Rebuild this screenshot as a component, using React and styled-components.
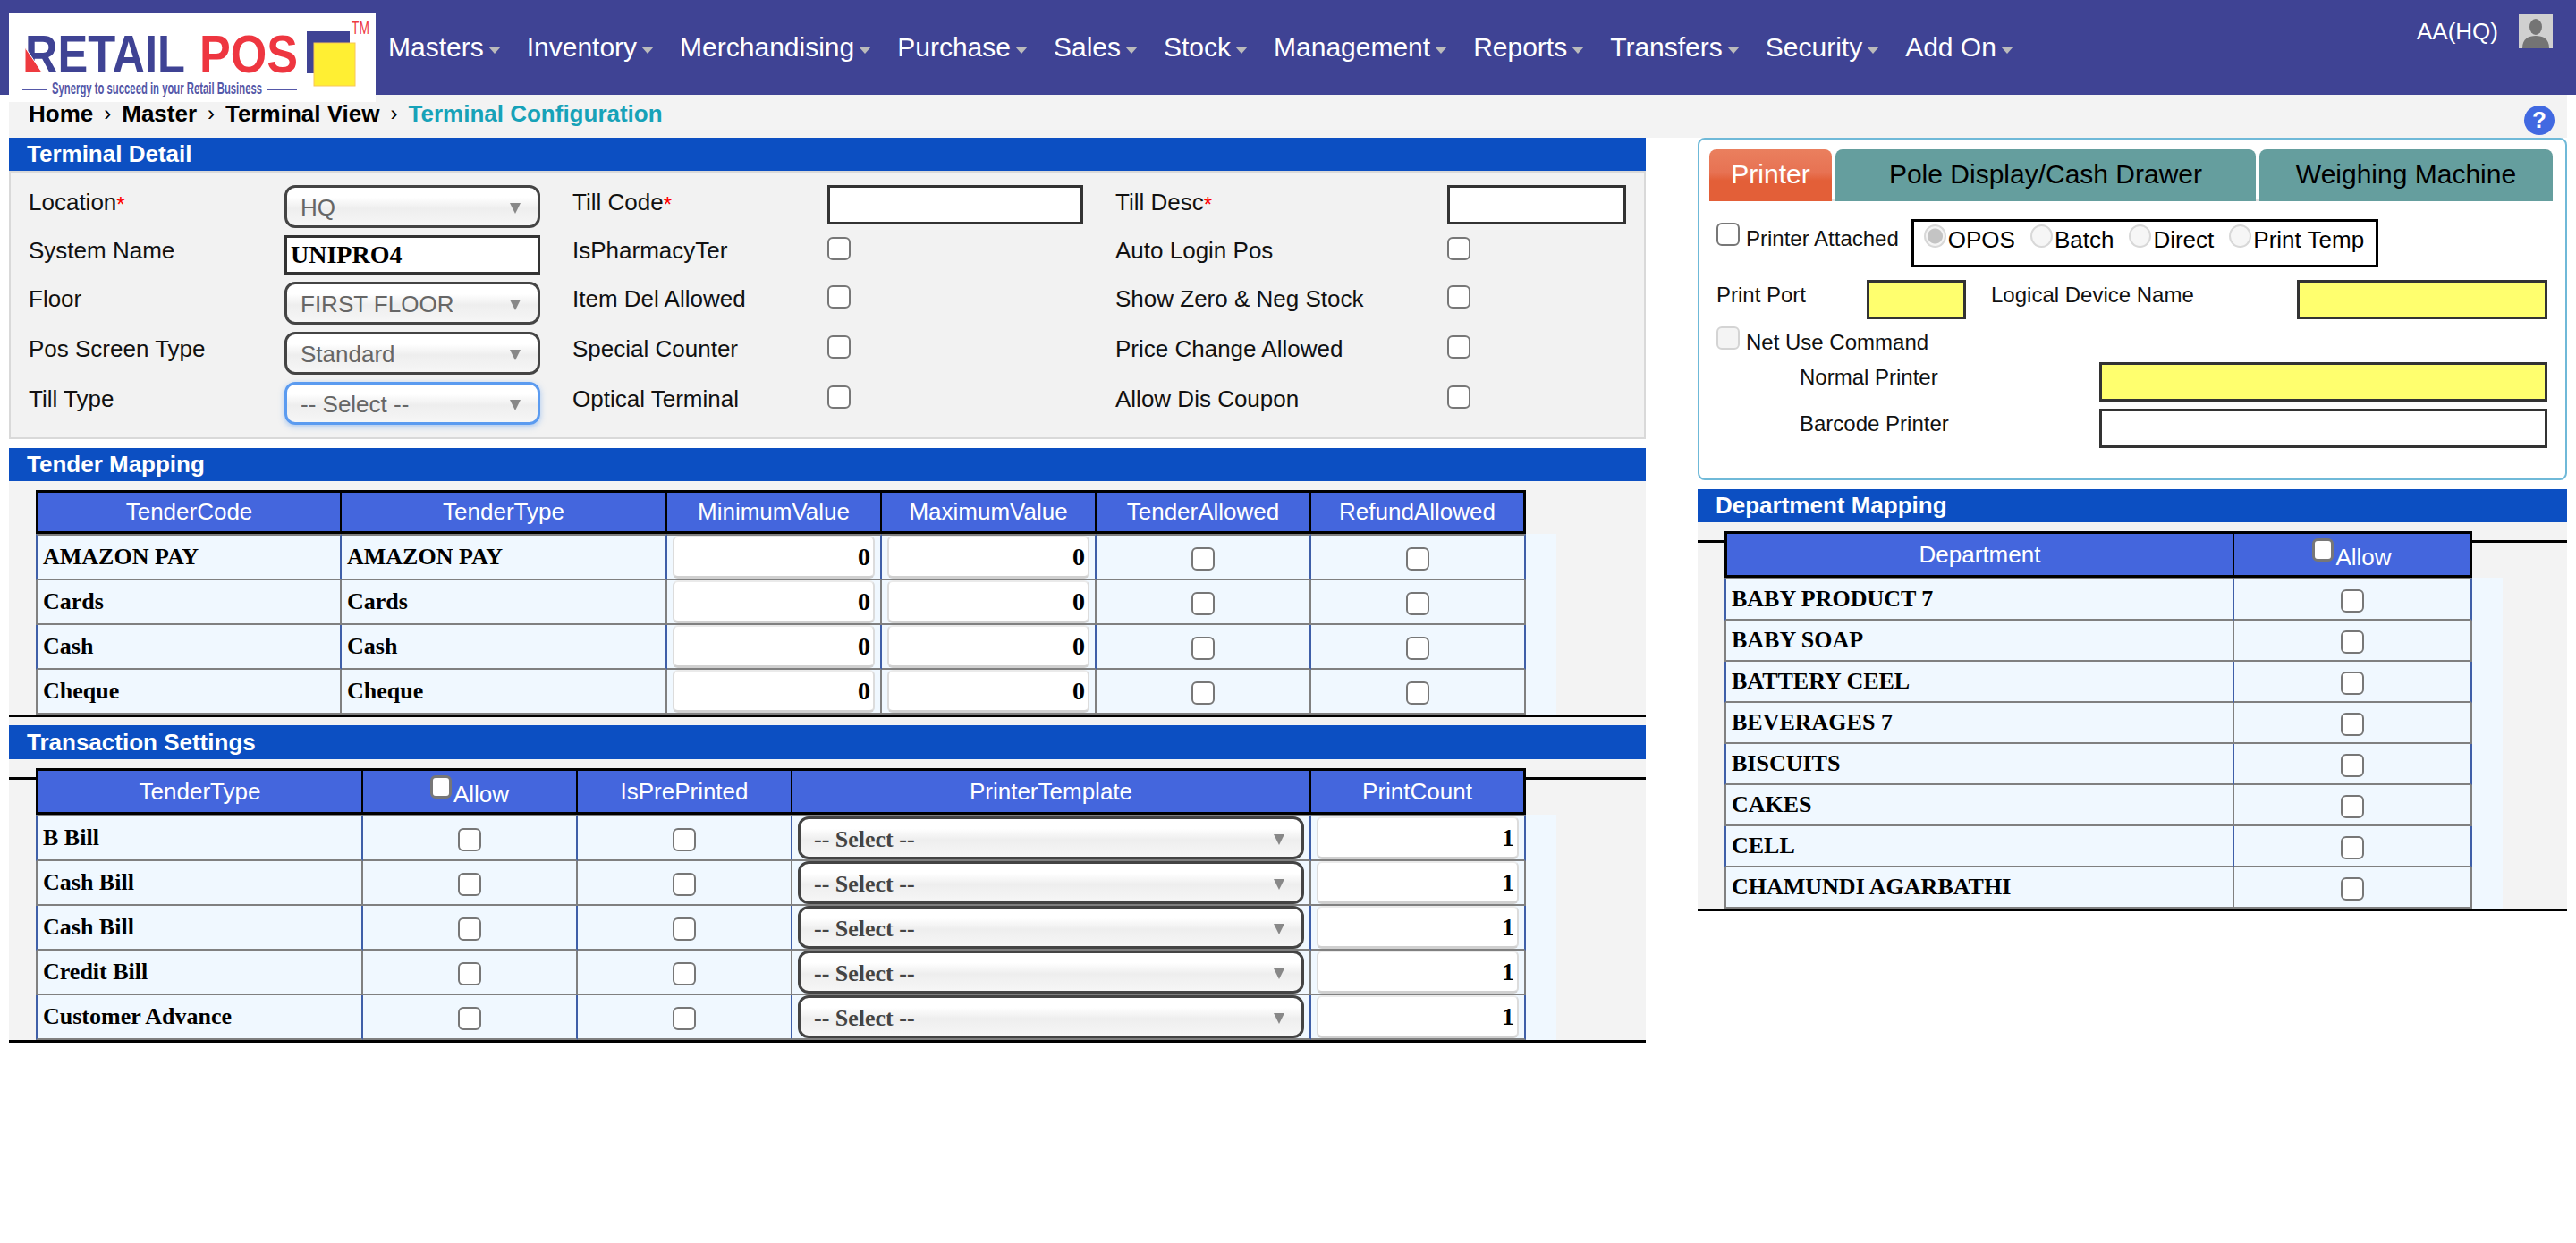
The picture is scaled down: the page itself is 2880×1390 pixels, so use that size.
import React from 'react'
import styled, { createGlobalStyle } from 'styled-components'

const GlobalStyle = createGlobalStyle`
  html, body {
    margin: 0;
    padding: 0;
    background: #fff;
    color: #111;
    font-family: "Liberation Sans", Arial, sans-serif;
  }

  * {
    box-sizing: border-box;
  }
`

const TopBar = styled.header`
  display: flex;
  align-items: flex-start;
  height: 106px;
  background: #3f4394;
`

const LogoBox = styled.div`
  position: relative;
  z-index: 1;
  flex: none;
  width: 410px;
  height: 100px;
  margin: 14px 0 0 10px;
  background: #fff;

  svg {
    display: block;
    overflow: visible;
  }
`

const Nav = styled.nav`
  display: flex;
  align-self: center;
  gap: 29px;
  margin-left: 14px;
`

const NavItem = styled.a`
  display: flex;
  align-items: center;
  gap: 5px;
  color: #fff;
  font-size: 30px;
  line-height: 36px;

  &::after {
    content: '';
    margin-top: 6px;
    border-style: solid;
    border-width: 8px 7px 0;
    border-color: #bbb transparent transparent;
  }
`

const UserBox = styled.div`
  display: flex;
  align-items: center;
  gap: 23px;
  margin: 16px 26px 0 auto;
  color: #fff;
  font-size: 26px;
`

const Crumbs = styled.div`
  display: flex;
  align-items: center;
  height: 48px;
  margin: 0 10px;
  padding: 0 14px 6px 22px;
  background: #f3f3f3;
  font-size: 26px;
  font-weight: bold;
  color: #000;
`

const CrumbSep = styled.span`
  margin: 0 12px;
  font-weight: normal;
  font-size: 24px;
`

const CrumbNow = styled.span`
  color: #17a2b8;
`

const HelpDot = styled.span`
  display: flex;
  align-items: center;
  justify-content: center;
  width: 34px;
  height: 33px;
  margin: 15px 0 0 auto;
  border-radius: 50%;
  background: #4169e1;
  color: #fff;
  font-size: 26px;
`

const Columns = styled.main`
  display: flex;
  gap: 58px;
  padding: 0 10px;
`

const LeftCol = styled.div`
  flex: none;
  width: 1830px;
`

const RightCol = styled.div`
  flex: none;
  width: 972px;
`

const SectionHead = styled.h2`
  margin: 0;
  height: ${p => p.$h || 37}px;
  padding-left: 20px;
  background: #0c4fc2;
  color: #fff;
  font-size: 26px;
  font-weight: bold;
  line-height: ${p => p.$h || 37}px;
`

const DetailPanel = styled.div`
  display: grid;
  grid-template-columns: 286px 286px 321px 286px 407px 200px;
  grid-template-rows: 48px 44px 48px 48px 48px;
  row-gap: 8px;
  height: 300px;
  margin-bottom: 10px;
  padding: 14px 0 0 20px;
  border: 2px solid #d9d9d9;
  background: #f2f2f2;
`

const FieldLabel = styled.label`
  align-self: center;
  margin-bottom: 10px;
  font-size: 26px;
  color: #111;
`

const MidLabel = styled(FieldLabel)`
  padding-left: 36px;
`

const Req = styled.span`
  color: #f00;
  font-size: 24px;
  line-height: 0;
  vertical-align: -2px;
`

const Check = styled.input.attrs({ type: 'checkbox' })`
  appearance: none;
  display: block;
  flex: none;
  width: 26px;
  height: 26px;
  margin: 0;
  border: 2px solid ${p => (p.disabled ? '#d4d4d4' : '#777')};
  border-radius: 6px;
  background: ${p => (p.disabled ? '#f4f4f4' : '#fff')};
`

const GridCheck = styled(Check)`
  align-self: center;
  margin-bottom: 14px;
`

const TextBox = styled.input`
  display: block;
  height: 44px;
  margin: 0;
  padding: 0 4px;
  border: 3px solid #333;
  border-radius: 0;
  outline: none;
  background: ${p => (p.$yellow ? '#ffff6e' : '#fff')};
  color: #000;
  font-family: "Liberation Serif", "Times New Roman", serif;
  font-size: 28px;
  font-weight: bold;
`

const GridBox = styled(TextBox)`
  width: 100%;
`

const SelectWrap = styled.div`
  position: relative;
  height: 48px;

  &::after {
    content: '';
    position: absolute;
    top: 20px;
    right: 22px;
    border-style: solid;
    border-width: 12px 6px 0;
    border-color: #888 transparent transparent;
    pointer-events: none;
  }
`

const Select = styled.select`
  appearance: none;
  display: block;
  width: 100%;
  height: 100%;
  margin: 0;
  padding: 2px 0 0 15px;
  border: 3px solid ${p => (p.$focus ? '#5b9bf0' : '#444')};
  border-radius: 12px;
  outline: none;
  background: linear-gradient(#fff 0%, #fff 25%, #eeeeee 55%, #f6f6f6 100%);
  box-shadow: ${p => (p.$focus ? '0 2px 6px rgba(91, 155, 240, 0.5)' : 'none')};
  color: ${p => (p.$cell ? '#444' : '#666')};
  font-family: ${p => (p.$cell ? '"Liberation Serif", serif' : '"Liberation Sans", sans-serif')};
  font-size: 26px;
  font-weight: ${p => (p.$cell ? 'bold' : 'normal')};
`

const TableSection = styled.section`
  padding-top: 10px;
  border-bottom: 3px solid #000;
  background: ${p => (p.$rule === undefined
    ? '#f3f3f3'
    : `linear-gradient(#000, #000) 0 ${p.$rule}px / 100% 3px no-repeat, #f3f3f3`)};
`

const SectionGap = styled.div`
  height: 9px;
  background: #f3f3f3;
`

const TableShell = styled.div`
  width: ${p => p.$width}px;
  margin-left: 30px;
  background: linear-gradient(transparent ${p => p.$head}px, #f0f8ff ${p => p.$head}px);
`

const GridTable = styled.table`
  table-layout: fixed;
  width: ${p => p.$width}px;
  border-collapse: separate;
  border-spacing: 0;
`

const HeadCell = styled.th`
  height: ${p => p.$h}px;
  padding: 0;
  border-top: 3px solid #000;
  border-bottom: 3px solid #000;
  border-right: 2px solid #000;
  background: #4466dd;
  color: #fff;
  font-size: 26px;
  font-weight: normal;
  text-align: center;

  &:first-child {
    border-left: 3px solid #000;
  }

  &:last-child {
    border-right-width: 3px;
  }
`

const AllowHead = styled.span`
  display: inline-flex;
  align-items: flex-start;
  padding-top: 6px;
`

const HeadCheck = styled(Check)`
  width: 24px;
  margin: -6px 2px 0 0;
  border-width: 3px;
`

const BodyRow = styled.tr`
  td {
    border-right-color: ${p => (p.$odd ? '#3f5fa8' : '#808080')};
  }

  td:first-child {
    border-left-color: ${p => (p.$odd ? '#3f5fa8' : '#808080')};
  }

  &:first-child td {
    height: ${p => p.$h + 2}px;
    border-top: 2px solid #808080;
  }
`

const BodyCell = styled.td`
  height: ${p => p.$h}px;
  padding: 0;
  border-bottom: 2px solid #808080;
  border-right: 2px solid #808080;
  background: #f0f8ff;
  color: #000;
  font-family: "Liberation Serif", "Times New Roman", serif;
  font-size: 26px;
  font-weight: bold;

  &:first-child {
    border-left: 2px solid #808080;
  }
`

const NameCell = styled(BodyCell)`
  padding: 0 0 0 6px;
`

const FillCell = styled(BodyCell)`
  padding: 0 6px;
`

const CellCheck = styled(Check)`
  margin: 4px auto 0;
`

const NumberBox = styled.input`
  display: block;
  width: 100%;
  height: 48px;
  margin: 0;
  padding: 0 3px 0 0;
  border: 2px solid #dcdcdc;
  border-top-color: #eaeaea;
  border-bottom: 3px solid #d0d0d0;
  border-radius: 6px;
  outline: none;
  background: #fff;
  color: #000;
  font-family: "Liberation Serif", "Times New Roman", serif;
  font-size: 28px;
  font-weight: bold;
  text-align: right;
`

const TabCard = styled.div`
  height: 383px;
  margin-bottom: 10px;
  padding: 11px 14px 0 11px;
  border: 2px solid #6fb9d8;
  border-radius: 8px;
  background: #fff;
`

const TabRow = styled.div`
  display: flex;
  gap: 4px;
  height: 58px;
  border-bottom: 2px solid #e2e2e2;
`

const Tab = styled.div`
  display: flex;
  align-items: center;
  justify-content: center;
  flex: none;
  width: ${p => p.$w}px;
  height: 58px;
  padding-bottom: 2px;
  border-radius: 8px 8px 0 0;
  background: ${p => (p.$active ? 'linear-gradient(#ea7f5e, #e77253 45%, #e35f38 60%, #e35f38)' : '#659e9e')};
  color: ${p => (p.$active ? '#fff' : '#000')};
  font-size: 30px;
`

const FormRow = styled.div`
  display: flex;
  align-items: ${p => p.$align || 'center'};
  margin-top: ${p => p.$top}px;
  padding-left: ${p => p.$left || 8}px;
`

const FormText = styled.span`
  flex: none;
  width: ${p => (p.$w ? `${p.$w}px` : 'auto')};
  margin-bottom: ${p => p.$up || 0}px;
  margin-left: ${p => p.$ml || 0}px;
  margin-top: ${p => p.$down || 0}px;
  font-size: 24px;
  color: #111;
`

const TopCheck = styled(Check)`
  margin-top: 4px;
`

const RadioGroup = styled.div`
  display: flex;
  align-items: center;
  gap: 17px;
  width: 522px;
  height: 54px;
  margin-left: 14px;
  padding-left: 11px;
  border: 3px solid #000;
  font-size: 26px;
`

const RadioItem = styled.label`
  display: flex;
  align-items: center;
  gap: 2px;
  margin-bottom: 8px;
  color: #000;
`

const Radio = styled.input.attrs({ type: 'radio', disabled: true })`
  appearance: none;
  flex: none;
  width: 25px;
  height: 26px;
  margin: -8px 0 0;
  border: 2px solid #d8d8d8;
  border-radius: 50%;
  background: #f6f6f6;

  &:checked {
    background: radial-gradient(circle, #c4c4c4 0 8px, #f4f4f4 9px);
  }
`

const FormBox = styled(TextBox)`
  flex: none;
  width: ${p => p.$w}px;
`

const tenders = ['AMAZON PAY', 'Cards', 'Cash', 'Cheque']
const transactions = ['B Bill', 'Cash Bill', 'Cash Bill', 'Credit Bill', 'Customer Advance']
const departments = [
  'BABY PRODUCT 7', 'BABY SOAP', 'BATTERY CEEL', 'BEVERAGES 7',
  'BISCUITS', 'CAKES', 'CELL', 'CHAMUNDI AGARBATHI',
]
const menu = [
  'Masters', 'Inventory', 'Merchandising', 'Purchase', 'Sales', 'Stock',
  'Management', 'Reports', 'Transfers', 'Security', 'Add On',
]

function Logo() {
  return (
    <svg width="410" height="100" viewBox="0 0 410 100">
      <text x="18" y="67" fontFamily="Liberation Sans" fontWeight="bold" fontSize="59" fill="#3f4394" textLength="179" lengthAdjust="spacingAndGlyphs">RETAIL</text>
      <polygon points="18,39 37,67 18,67" fill="#ee3a3f" stroke="#fff" strokeWidth="1" />
      <text x="213" y="67" fontFamily="Liberation Sans" fontWeight="bold" fontSize="59" fill="#ee3640" textLength="110" lengthAdjust="spacingAndGlyphs">POS</text>
      <path d="M333 21h48v14h-40v33h-8z" fill="#3f4394" />
      <rect x="341" y="34" width="46" height="48" fill="#ffef33" stroke="#f8c65a" strokeWidth="1" />
      <text x="383" y="24" fontFamily="Liberation Sans" fontSize="21" fill="#ee3a3f" textLength="20" lengthAdjust="spacingAndGlyphs">TM</text>
      <rect x="15" y="85" width="28" height="2" fill="#5558a8" />
      <text x="48" y="91" fontFamily="Liberation Sans" fontWeight="bold" fontSize="18" fill="#5558a8" textLength="235" lengthAdjust="spacingAndGlyphs">Synergy to succeed in your Retail Business</text>
      <rect x="288" y="85" width="34" height="2" fill="#5558a8" />
    </svg>
  )
}

function Avatar() {
  return (
    <svg width="38" height="38" viewBox="0 0 38 38">
      <rect width="38" height="38" fill="#d0d0d0" />
      <ellipse cx="19" cy="14" rx="7" ry="9" fill="#747474" />
      <path d="M4 38c0-11 7-14 15-14s15 3 15 14z" fill="#747474" />
    </svg>
  )
}

function CellSelect() {
  return (
    <SelectWrap>
      <Select $cell defaultValue="x">
        <option value="x">-- Select --</option>
      </Select>
    </SelectWrap>
  )
}

function FieldSelect({ value, focus }) {
  return (
    <SelectWrap>
      <Select $focus={focus} defaultValue={value}>
        <option value={value}>{value}</option>
      </Select>
    </SelectWrap>
  )
}

function TerminalDetail() {
  return (
    <DetailPanel>
      <FieldLabel>Location<Req>*</Req></FieldLabel>
      <FieldSelect value="HQ" />
      <MidLabel>Till Code<Req>*</Req></MidLabel>
      <GridBox />
      <MidLabel>Till Desc<Req>*</Req></MidLabel>
      <GridBox />

      <FieldLabel>System Name</FieldLabel>
      <GridBox defaultValue="UNIPRO4" />
      <MidLabel>IsPharmacyTer</MidLabel>
      <GridCheck />
      <MidLabel>Auto Login Pos</MidLabel>
      <GridCheck />

      <FieldLabel>Floor</FieldLabel>
      <FieldSelect value="FIRST FLOOR" />
      <MidLabel>Item Del Allowed</MidLabel>
      <GridCheck />
      <MidLabel>Show Zero &amp; Neg Stock</MidLabel>
      <GridCheck />

      <FieldLabel>Pos Screen Type</FieldLabel>
      <FieldSelect value="Standard" />
      <MidLabel>Special Counter</MidLabel>
      <GridCheck />
      <MidLabel>Price Change Allowed</MidLabel>
      <GridCheck />

      <FieldLabel>Till Type</FieldLabel>
      <FieldSelect value="-- Select --" focus />
      <MidLabel>Optical Terminal</MidLabel>
      <GridCheck />
      <MidLabel>Allow Dis Coupon</MidLabel>
      <GridCheck />
    </DetailPanel>
  )
}

function Cols({ widths }) {
  return (
    <colgroup>
      {widths.map((w, i) => <col key={i} width={w} />)}
    </colgroup>
  )
}

function AllowCell() {
  return (
    <AllowHead><HeadCheck />Allow</AllowHead>
  )
}

function TenderMapping() {
  return (
    <TableSection>
      <TableShell $width={1700} $head={49}>
        <GridTable $width={1666}>
          <Cols widths={[342, 364, 240, 240, 240, 240]} />
          <thead>
            <tr>
              {['TenderCode', 'TenderType', 'MinimumValue', 'MaximumValue', 'TenderAllowed', 'RefundAllowed'].map(t => (
                <HeadCell key={t} $h={49}>{t}</HeadCell>
              ))}
            </tr>
          </thead>
          <tbody>
            {tenders.map((t, i) => (
              <BodyRow key={t} $odd={i % 2 === 0} $h={50}>
                <NameCell $h={50}>{t}</NameCell>
                <NameCell $h={50}>{t}</NameCell>
                <FillCell $h={50}><NumberBox defaultValue="0" /></FillCell>
                <FillCell $h={50}><NumberBox defaultValue="0" /></FillCell>
                <BodyCell $h={50}><CellCheck /></BodyCell>
                <BodyCell $h={50}><CellCheck /></BodyCell>
              </BodyRow>
            ))}
          </tbody>
        </GridTable>
      </TableShell>
    </TableSection>
  )
}

function TransactionSettings() {
  return (
    <TableSection $rule={20}>
      <TableShell $width={1700} $head={52}>
        <GridTable $width={1666}>
          <Cols widths={[366, 240, 240, 580, 240]} />
          <thead>
            <tr>
              <HeadCell $h={52}>TenderType</HeadCell>
              <HeadCell $h={52}><AllowCell /></HeadCell>
              <HeadCell $h={52}>IsPrePrinted</HeadCell>
              <HeadCell $h={52}>PrinterTemplate</HeadCell>
              <HeadCell $h={52}>PrintCount</HeadCell>
            </tr>
          </thead>
          <tbody>
            {transactions.map((t, i) => (
              <BodyRow key={i} $odd={i % 2 === 0} $h={50}>
                <NameCell $h={50}>{t}</NameCell>
                <BodyCell $h={50}><CellCheck /></BodyCell>
                <BodyCell $h={50}><CellCheck /></BodyCell>
                <FillCell $h={50}><CellSelect /></FillCell>
                <FillCell $h={50}><NumberBox defaultValue="1" /></FillCell>
              </BodyRow>
            ))}
          </tbody>
        </GridTable>
      </TableShell>
    </TableSection>
  )
}

function PrinterTabs() {
  return (
    <TabCard>
      <TabRow>
        <Tab $active $w={137}>Printer</Tab>
        <Tab $w={470}>Pole Display/Cash Drawer</Tab>
        <Tab $w={328}>Weighing Machine</Tab>
      </TabRow>
      <FormRow $top={20} $align="flex-start">
        <TopCheck />
        <FormText $ml={7} $down={8}>Printer Attached</FormText>
        <RadioGroup>
          <RadioItem><Radio defaultChecked />OPOS</RadioItem>
          <RadioItem><Radio />Batch</RadioItem>
          <RadioItem><Radio />Direct</RadioItem>
          <RadioItem><Radio />Print Temp</RadioItem>
        </RadioGroup>
      </FormRow>
      <FormRow $top={14}>
        <FormText $w={168} $up={10}>Print Port</FormText>
        <FormBox $yellow $w={111} />
        <FormText $w={342} $ml={28} $up={10}>Logical Device Name</FormText>
        <FormBox $yellow $w={280} />
      </FormRow>
      <FormRow $top={8} $align="flex-start">
        <Check disabled />
        <FormText $ml={7} $down={4}>Net Use Command</FormText>
      </FormRow>
      <FormRow $top={8} $left={101}>
        <FormText $w={335} $up={10}>Normal Printer</FormText>
        <FormBox $yellow $w={501} />
      </FormRow>
      <FormRow $top={8} $left={101}>
        <FormText $w={335} $up={10}>Barcode Printer</FormText>
        <FormBox $w={501} />
      </FormRow>
    </TabCard>
  )
}

function DepartmentMapping() {
  return (
    <TableSection $rule={20}>
      <TableShell $width={870} $head={52}>
        <GridTable $width={836}>
          <Cols widths={[570, 266]} />
          <thead>
            <tr>
              <HeadCell $h={52}>Department</HeadCell>
              <HeadCell $h={52}><AllowCell /></HeadCell>
            </tr>
          </thead>
          <tbody>
            {departments.map((d, i) => (
              <BodyRow key={d} $odd={i % 2 === 0} $h={46}>
                <NameCell $h={46}>{d}</NameCell>
                <BodyCell $h={46}><CellCheck /></BodyCell>
              </BodyRow>
            ))}
          </tbody>
        </GridTable>
      </TableShell>
    </TableSection>
  )
}

export default function App() {
  return (
    <>
      <GlobalStyle />
      <TopBar>
        <LogoBox><Logo /></LogoBox>
        <Nav>
          {menu.map(m => <NavItem key={m}>{m}</NavItem>)}
        </Nav>
        <UserBox>
          AA(HQ)
          <Avatar />
        </UserBox>
      </TopBar>
      <Crumbs>
        Home<CrumbSep>›</CrumbSep>
        Master<CrumbSep>›</CrumbSep>
        Terminal View<CrumbSep>›</CrumbSep>
        <CrumbNow>Terminal Configuration</CrumbNow>
        <HelpDot>?</HelpDot>
      </Crumbs>
      <Columns>
        <LeftCol>
          <SectionHead>Terminal Detail</SectionHead>
          <TerminalDetail />
          <SectionHead>Tender Mapping</SectionHead>
          <TenderMapping />
          <SectionGap />
          <SectionHead $h={38}>Transaction Settings</SectionHead>
          <TransactionSettings />
        </LeftCol>
        <RightCol>
          <PrinterTabs />
          <SectionHead>Department Mapping</SectionHead>
          <DepartmentMapping />
        </RightCol>
      </Columns>
    </>
  )
}
